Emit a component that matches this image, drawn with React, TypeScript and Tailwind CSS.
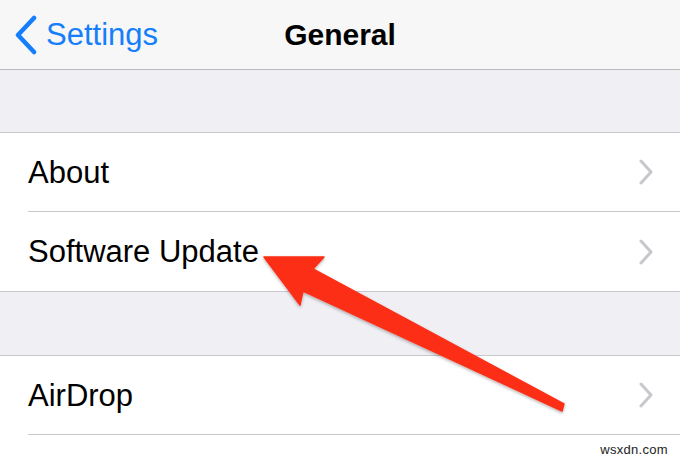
import React from "react";

type Row = { label: string; divider: boolean };

const groups: Row[][] = [
  [
    { label: "About", divider: true },
    { label: "Software Update", divider: false },
  ],
  [{ label: "AirDrop", divider: true }],
];

function Chevron() {
  return (
    <svg width="16" height="26" viewBox="0 0 16 26" fill="none">
      <path
        d="M3 2 L13 13 L3 24"
        stroke="#c7c7cc"
        strokeWidth="3"
        strokeLinecap="round"
        strokeLinejoin="round"
      />
    </svg>
  );
}

function SettingsRow({ label, divider }: Row) {
  return (
    <div className="h-[79px] pl-[28px] bg-white">
      <div
        className={
          "h-full flex items-center justify-between pr-[26px] " +
          (divider ? "border-b border-[#c8c7cc]" : "")
        }
      >
        <span className="text-[31px] text-black leading-none">{label}</span>
        <Chevron />
      </div>
    </div>
  );
}

export default function App() {
  return (
    <div className="relative w-[680px] h-[457px] overflow-hidden bg-white font-['Liberation_Sans',Arial,sans-serif]">
      {/* nav bar */}
      <div className="h-[70px] bg-[#f7f7f7] border-b border-[#b9b9bd] grid grid-cols-[1fr_auto_1fr] items-center">
        <div className="flex items-center gap-[8px] pl-[14px] text-[#157efb]">
          <svg width="24" height="40" viewBox="0 0 24 40" fill="none">
            <path
              d="M20 3 L4 20 L20 37"
              stroke="#157efb"
              strokeWidth="4.5"
              strokeLinecap="round"
              strokeLinejoin="round"
            />
          </svg>
          <span className="text-[31px] leading-none">Settings</span>
        </div>
        <div className="text-[30px] font-bold text-black leading-none">General</div>
        <div />
      </div>

      {/* table sections */}
      {groups.map((rows, i) => (
        <div key={i}>
          <div className={i === 0 ? "h-[62px] bg-[#efeff4]" : "h-[63px] bg-[#efeff4]"} />
          <div
            className={
              "border-t border-[#c8c7cc] " +
              (i === 0 ? "border-b" : "")
            }
          >
            {rows.map((r) => (
              <SettingsRow key={r.label} {...r} />
            ))}
          </div>
        </div>
      ))}

      <div className="flex justify-end pr-[12px] pt-[5px]">
        <span className="text-[13px] text-[#222] tracking-[0.3px]">wsxdn.com</span>
      </div>

      {/* annotation arrow */}
      <svg
        className="absolute left-0 top-0 pointer-events-none"
        width="680"
        height="457"
        viewBox="0 0 680 457"
      >
        <defs>
          <filter id="arrowShadow" x="-10%" y="-10%" width="120%" height="130%">
            <feDropShadow dx="0" dy="1.5" stdDeviation="1.5" floodColor="#000" floodOpacity="0.3" />
          </filter>
        </defs>
        <polygon
          points="264,257 324,257 313,269 564,404 562,411 303,291 300,305"
          fill="#fc2f16"
          strokeLinejoin="round"
          stroke="#fc2f16"
          strokeWidth="1.5"
          filter="url(#arrowShadow)"
        />
      </svg>
    </div>
  );
}
